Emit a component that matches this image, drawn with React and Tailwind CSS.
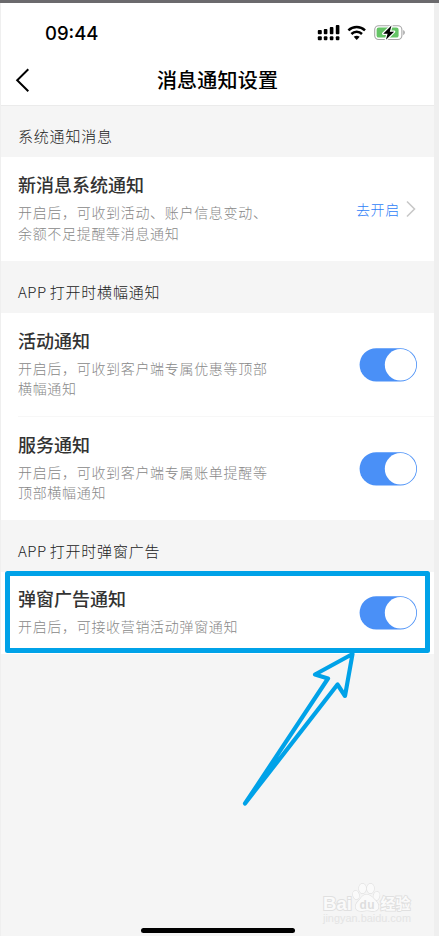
function StatusIcons() {
  return (
    <svg width="90" height="18" viewBox="0 0 90 18" className="block">
      {/* dual-SIM signal */}
      <g fill="#000">
        <rect x="0.8" y="6" width="4" height="4.2" rx="0.9" />
        <rect x="6.8" y="5" width="3.6" height="5.2" rx="0.9" />
        <rect x="12.8" y="3" width="3.6" height="7.2" rx="0.9" />
        <rect x="18.800" y="1" width="3.6" height="9.2" rx="0.9" />
        <rect x="0.8" y="12.2" width="4" height="4" rx="1" />
        <rect x="6.8" y="12.2" width="3.6" height="4" rx="1" />
        <rect x="12.8" y="12.2" width="3.6" height="4" rx="1" />
        <rect x="18.800" y="12.2" width="3.6" height="4" rx="1" />
      </g>
      {/* wifi */}
      <g fill="none" stroke="#000" strokeWidth="2.5">
        <path d="M31.400 6.400a12 12 0 0 1 16.600 0" />
        <path d="M34.400 10a7.600 7.600 0 0 1 10.600 0" />
      </g>
      <path d="M36.700 12.800q3-2.200 6 0L39.700 16z" fill="#000" />
      {/* charging battery */}
      <rect x="57.7" y="1.7" width="27.2" height="13.8" rx="4" fill="none" stroke="#a6a6a6" strokeWidth="1.1" />
      <path d="M86.2 6v5.2q1.7-.7 1.7-2.6t-1.7-2.6z" fill="#a6a6a6" />
      <rect x="59.6" y="3.6" width="22" height="10" rx="2.2" fill="#65c466" />
      <path d="M74.500 1.600 66.200 9.700h4.400l-1.700 6.100 8.200-8.100h-4.300z" fill="#000" stroke="#fff" strokeWidth="2.400" strokeLinejoin="round" />
      <path d="M74.500 1.600 66.200 9.700h4.400l-1.700 6.100 8.200-8.100h-4.300z" fill="#000" />
    </svg>
  );
}

function Toggle() {
  return (
    <svg width="58" height="34" viewBox="0 0 58 34" className="shrink-0">
      <rect x="0.6" y="0.2" width="57.4" height="33.2" rx="16.6" fill="#4a90f7" />
      <circle cx="41.500" cy="16.800" r="15.700" fill="#fff" />
    </svg>
  );
}

function SectionTitle({ prefix, children }) {
  return (
    <h2 className="flex h-[52px] items-center pt-[11px] pl-[17px] text-[15px] font-light text-[#222]">
      {prefix && <span className="mr-[3px] tracking-[0.5px]">{prefix}</span>}
      <span className="tracking-[0.8px]">{children}</span>
    </h2>
  );
}

function Row({ title, lines, height, children }) {
  return (
    <div className={`flex items-center justify-between bg-white pr-[17px] pl-[17px] ${height}`}>
      <div className="pb-[4px]">
        <h3 className="text-[18px] leading-[27px] font-medium text-[#333]">{title}</h3>
        <p className="mt-1 text-[14px] leading-[20.5px] font-light tracking-[0.68px] text-[#888]">
          {lines.map((line) => (
            <span key={line} className="block whitespace-nowrap">{line}</span>
          ))}
        </p>
      </div>
      {children}
    </div>
  );
}

function Watermark() {
  return (
    <svg width="96" height="46" viewBox="0 0 96 46" className="absolute top-[877px] left-[320px]">
      <g fill="#fafafa" stroke="#e0e0e0" strokeWidth="1.2" paintOrder="stroke">
        <text x="2" y="30" fontFamily="Liberation Sans, sans-serif" fontWeight="bold" fontSize="19" textLength="29" lengthAdjust="spacingAndGlyphs" strokeWidth="2">Bai</text>
        <ellipse cx="35" cy="15" rx="3" ry="4.200" transform="rotate(-15 35 15)" />
        <ellipse cx="41.500" cy="8.500" rx="3.600" ry="4.800" />
        <ellipse cx="49.500" cy="8.500" rx="3.600" ry="4.800" />
        <ellipse cx="55.500" cy="16" rx="3" ry="4.200" transform="rotate(15 55.500 16)" />
        <path d="M45.500 14.500c-4 0-5.500 4-8 6.500-4 3.500-4 9.500 1.500 10 3 .3 4-.5 7-.5s4.500.8 7.500.5c5-.5 5-6.500 1.500-10-2.500-2.500-5.500-6.500-9.500-6.500z" />
        <text x="38.500" y="28.500" fontFamily="Liberation Sans, sans-serif" fontWeight="bold" fontSize="12" textLength="15" fill="#dedede" stroke="none">du</text>
        <text x="59.500" y="28.500" fontFamily="Noto Sans CJK SC, sans-serif" fontWeight="bold" fontSize="15" textLength="30" strokeWidth="1.800">经验</text>
        <text x="2" y="42" fontFamily="Liberation Sans, sans-serif" fontSize="10" textLength="88" lengthAdjust="spacingAndGlyphs" fill="#e4e4e4" stroke="none">jingyan.baidu.com</text>
      </g>
    </svg>
  );
}

export default function App() {
  return (
    <div className="h-[936px] w-[439px] overflow-hidden bg-[#6b6a6d] pt-[3px]">
      <div className="relative h-[933px] border-r-[5px] border-l border-[#efefef] bg-[#f5f5f5] font-['Noto_Sans_CJK_SC',sans-serif]">
        <header className="h-[102px] bg-white">
          <div className="flex h-[51px] items-center justify-between pt-[9px] pr-[27px] pl-11">
            <span className="pt-0.5 font-[Inter,sans-serif] text-[18.5px] font-medium text-black">09:44</span>
            <StatusIcons />
          </div>
          <div className="grid h-[51px] grid-cols-[60px_1fr_60px] items-center">
            <svg width="16" height="26" viewBox="0 0 16 26" className="ml-[13px]" fill="none" stroke="#000" strokeWidth="2">
              <path d="M14.300 2.300 3.200 13.200 14.300 24.300" />
            </svg>
            <h1 className="text-center text-[20px] leading-[30px] font-medium tracking-[0.2px] text-black">消息通知设置</h1>
          </div>
        </header>
        <main>
          <div className="border-t border-[#ebebeb]">
            <div className="-mt-px"><SectionTitle>系统通知消息</SectionTitle></div>
          </div>
          <Row title="新消息系统通知" lines={["开启后，可收到活动、账户信息变动、", "余额不足提醒等消息通知"]} height="h-[104px]">
            <span className="flex items-center gap-[6px] text-[14px] font-light tracking-[0.7px] text-[#2f7ef7]">
              <span>去开启</span>
              <svg width="11" height="18" viewBox="0 0 11 18" fill="none" stroke="#c8c8c8" strokeWidth="1.6">
                <path d="M1 1.500 8.500 9 1 16.500" />
              </svg>
            </span>
          </Row>
          <SectionTitle prefix="APP">打开时横幅通知</SectionTitle>
          <Row title="活动通知" lines={["开启后，可收到客户端专属优惠等顶部", "横幅通知"]} height="h-[103px]">
            <Toggle />
          </Row>
          <div className="bg-white pl-[17px]"><div className="h-px bg-[#f7f7f7]" /></div>
          <Row title="服务通知" lines={["开启后，可收到客户端专属账单提醒等", "顶部横幅通知"]} height="h-[103px]">
            <Toggle />
          </Row>
          <SectionTitle prefix="APP">打开时弹窗广告</SectionTitle>
          <Row title="弹窗广告通知" lines={["开启后，可接收营销活动弹窗通知"]} height="h-[82px]">
            <Toggle />
          </Row>
        </main>

        {/* highlight and pointer drawn over the page */}
        <svg width="438" height="933" viewBox="1 3 438 933" className="absolute top-0 left-0" fill="none" stroke="#00a2e8" strokeLinejoin="round">
          <rect x="7.500" y="573.500" width="420" height="77" strokeWidth="5" />
          <path d="M245 803.500 328 678.500 315 674.500 352.500 654 345 696 337.500 684.500z" strokeWidth="4.200" />
        </svg>
        <Watermark />
        <div className="absolute top-[925px] left-[140px] h-[5px] w-[154px] rounded-full bg-black" />
      </div>
    </div>
  );
}
